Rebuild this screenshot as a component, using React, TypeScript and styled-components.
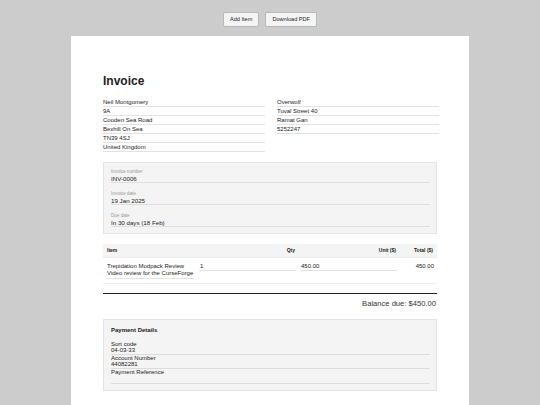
import React from "react";
import styled, { createGlobalStyle } from "styled-components";

const GlobalStyle = createGlobalStyle`
  * { box-sizing: border-box; }
  html, body {
    margin: 0;
    padding: 0;
    background: #cccccc;
    font-family: "Liberation Sans", Arial, sans-serif;
    color: #222;
  }
`;

const Page = styled.div`
  display: flex;
  flex-direction: column;
  align-items: center;
  padding-top: 12px;
  min-height: 405px;
`;

const Toolbar = styled.div`
  display: flex;
  gap: 6px;
  margin-bottom: 9px;
`;

const ToolButton = styled.button`
  font-family: "Liberation Sans", Arial, sans-serif;
  font-size: 5.6px;
  line-height: 7px;
  color: #222;
  background: #f4f4f4;
  border: 1px solid #b8b8b8;
  border-radius: 2px;
  padding: 3px 6px;
  height: 15px;
  cursor: pointer;
`;

const Paper = styled.div`
  width: 398px;
  background: #fff;
  padding: 38px 32px 30px 32px;
  min-height: 400px;
`;

const Title = styled.h1`
  margin: 0 0 10px 0;
  font-size: 12px;
  line-height: 14px;
  font-weight: 700;
`;

const Addresses = styled.div`
  display: grid;
  grid-template-columns: 162px 162px;
  column-gap: 12px;
  margin-bottom: 10px;
`;

const AddressLine = styled.div`
  font-size: 6px;
  line-height: 8px;
  border-bottom: 1px solid #e2e2e2;
`;

const Column = styled.div`
  display: flex;
  flex-direction: column;
`;

const GreyBox = styled.div`
  background: #f4f4f4;
  border: 1px solid #e4e4e4;
  padding: 6px 6px 6px 7px;
  display: flex;
  flex-direction: column;
  gap: 8px;
`;

const Field = styled.div`
  display: flex;
  flex-direction: column;
`;

const FieldLabel = styled.div`
  font-size: 4.6px;
  line-height: 6px;
  color: #999;
`;

const FieldValue = styled.div`
  font-size: 6.2px;
  line-height: 7px;
  color: #222;
  border-bottom: 1px solid #dedede;
`;

const Table = styled.table`
  width: 100%;
  margin-top: 10px;
  border-collapse: collapse;
  font-size: 6px;
`;

const Th = styled.th<{ $align?: string; $w?: number }>`
  background: #f4f4f4;
  font-size: 5px;
  font-weight: 700;
  text-align: ${(p) => p.$align || "left"};
  padding: 3px 4px;
  height: 13px;
  width: ${(p) => (p.$w ? `${p.$w}px` : "auto")};
  border-bottom: 1px solid #ececec;
`;

const Td = styled.td<{ $align?: string; $first?: boolean }>`
  vertical-align: top;
  text-align: ${(p) => p.$align || "left"};
  padding: 5px 3px 4px ${(p) => (p.$first ? "4px" : "1px")};
  border-bottom: 1px solid #eeeeee;
`;

const ItemText = styled.div`
  font-size: 6px;
  line-height: 7px;
  padding-bottom: 1px;
  border-bottom: 1px solid #e2e2e2;
  width: 87px;
  white-space: nowrap;
`;

const CellInput = styled.div<{ $plain?: boolean }>`
  font-size: 6px;
  line-height: 7px;
  border-bottom: 1px solid ${(p) => (p.$plain ? "transparent" : "#e2e2e2")};
  padding-left: 1px;
`;

const TotalLine = styled.div`
  margin-top: 9px;
  border-top: 1.2px solid #222;
  padding-top: 5px;
  text-align: right;
  font-size: 7.6px;
  line-height: 9px;
  color: #333;
  padding-right: 1px;
`;

const PaymentBox = styled.div`
  margin-top: 11px;
  background: #f4f4f4;
  border: 1px solid #e4e4e4;
  padding: 6px 6px 6px 7px;
`;

const PaymentTitle = styled.div`
  font-size: 6px;
  line-height: 8px;
  font-weight: 700;
  margin-bottom: 7px;
`;

const PayLabel = styled.div`
  font-size: 6px;
  line-height: 6px;
`;

const PayValue = styled.div<{ $tall?: boolean }>`
  font-size: 6px;
  line-height: 7px;
  min-height: ${(p) => (p.$tall ? "9px" : "7px")};
  border-bottom: 1px solid #dcdcdc;
`;

const from = [
  "Neil Montgomery",
  "9A",
  "Cooden Sea Road",
  "Bexhill On Sea",
  "TN39 4SJ",
  "United Kingdom",
];
const to = ["Overwolf", "Tuval Street 40", "Ramat Gan", "5252247"];

const meta = [
  { label: "Invoice number", value: "INV-0006" },
  { label: "Invoice date", value: "19 Jan 2025" },
  { label: "Due date", value: "In 30 days (18 Feb)" },
];

const payment = [
  { label: "Sort code", value: "04-03-33" },
  { label: "Account Number", value: "44082281" },
  { label: "Payment Reference", value: "" },
];

export default function App() {
  return (
    <>
      <GlobalStyle />
      <Page>
        <Toolbar>
          <ToolButton>Add Item</ToolButton>
          <ToolButton>Download PDF</ToolButton>
        </Toolbar>
        <Paper>
          <Title>Invoice</Title>
          <Addresses>
            <Column>
              {from.map((l) => (
                <AddressLine key={l}>{l}</AddressLine>
              ))}
            </Column>
            <Column>
              {to.map((l) => (
                <AddressLine key={l}>{l}</AddressLine>
              ))}
            </Column>
          </Addresses>

          <GreyBox>
            {meta.map((m) => (
              <Field key={m.label}>
                <FieldLabel>{m.label}</FieldLabel>
                <FieldValue>{m.value}</FieldValue>
              </Field>
            ))}
          </GreyBox>

          <Table>
            <thead>
              <tr>
                <Th $w={95}>Item</Th>
                <Th $align="right" $w={101}>Qty</Th>
                <Th $align="right" $w={101}>Unit ($)</Th>
                <Th $align="right">Total ($)</Th>
              </tr>
            </thead>
            <tbody>
              <tr>
                <Td $first>
                  <ItemText>
                    Trepidation Modpack Review
                    <br />
                    Video review for the CurseForge
                  </ItemText>
                </Td>
                <Td>
                  <CellInput>1</CellInput>
                </Td>
                <Td>
                  <CellInput>450.00</CellInput>
                </Td>
                <Td $align="right">
                  <CellInput $plain>450.00</CellInput>
                </Td>
              </tr>
            </tbody>
          </Table>

          <TotalLine>Balance due: $450.00</TotalLine>

          <PaymentBox>
            <PaymentTitle>Payment Details</PaymentTitle>
            {payment.map((p) => (
              <div key={p.label}>
                <PayLabel>{p.label}</PayLabel>
                <PayValue $tall={!p.value}>{p.value}</PayValue>
              </div>
            ))}
          </PaymentBox>
        </Paper>
      </Page>
    </>
  );
}
